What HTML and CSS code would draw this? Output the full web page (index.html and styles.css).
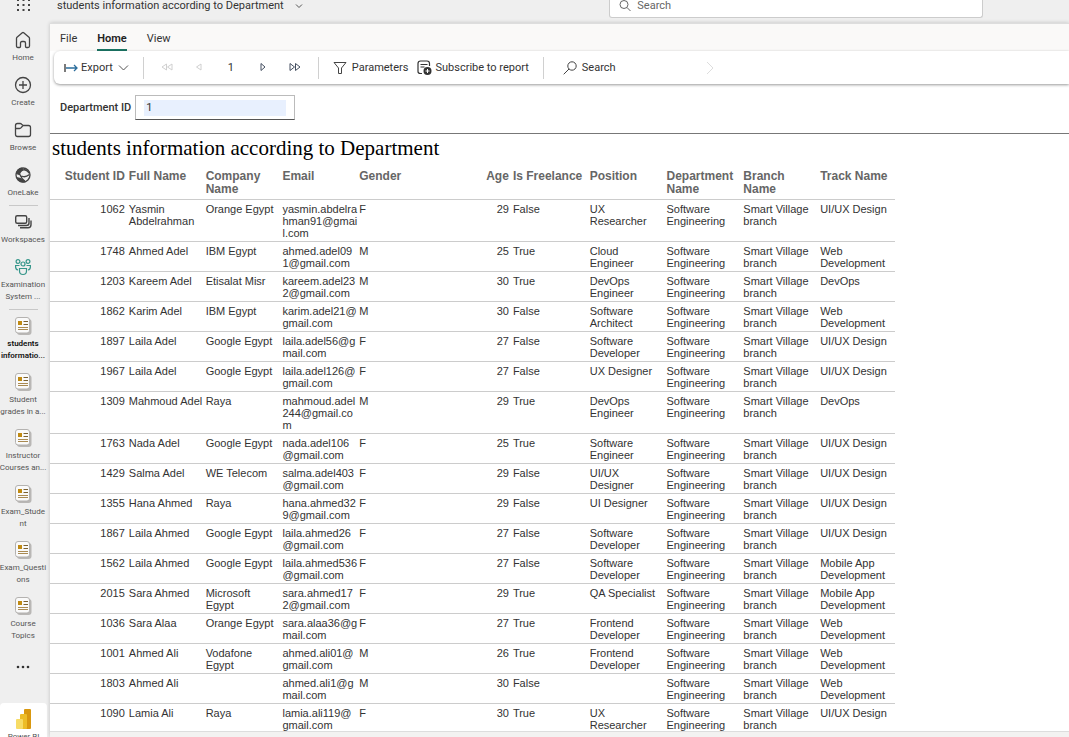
FILE: index.html
```html
<!DOCTYPE html>
<html lang="en">
<head>
<meta charset="utf-8">
<title>students information according to Department</title>
<link rel="stylesheet" href="styles.css">
</head>
<body>
<svg class="defs" aria-hidden="true">
  <symbol id="report" viewBox="0 0 20 20">
    <rect x="4" y="3" width="14.500" height="16" rx="3" fill="#b9b7b5"/>
    <rect x="2.500" y="1.500" width="14" height="15.500" rx="2.500" fill="#fafafa" stroke="#b4b2b0"/>
    <rect x="5" y="5" width="4" height="4" fill="#c08a12"/>
    <path d="M10.500 5.500H15M10.500 8.500H15" stroke="#7a6030"/>
    <path d="M5 11.500h10M5 13.500h10" stroke="#a98a52"/>
  </symbol>
</svg>
<div class="app">
  <header class="topbar">
    <button class="waffle" aria-label="App launcher">
      <svg width="14" height="12" viewBox="0 0 14 12" fill="#444"><path d="M0 0h2v1H0zM5.500 0h2v1h-2zM11 0h2v1h-2zM0 4h2v2H0zM5.500 4h2v2h-2zM11 4h2v2h-2zM0 9h2v2H0zM5.500 9h2v2h-2zM11 9h2v2h-2z"/></svg>
    </button>
    <button class="doc-name">students information according to Department
      <svg width="8" height="8" viewBox="0 0 8 8" fill="none" stroke="#555"><path d="M1 2.500l3 3 3-3"/></svg>
    </button>
    <label class="site-search">
      <svg width="12" height="12" viewBox="0 0 12 12" fill="none" stroke="#666"><circle cx="5" cy="4.500" r="4"/><path d="M8 7.500l3.500 3.500"/></svg>
      <input type="search" placeholder="Search" aria-label="Search">
    </label>
  </header>

  <nav class="rail" aria-label="Main">
    <a class="item" href="#"><svg width="20" height="20" viewBox="0 0 20 20" fill="none" stroke="#444" stroke-width="1.300" stroke-linejoin="round"><path d="M3.500 8.500Q3.500 7.800 4 7.300L9.300 2.800Q10 2.200 10.700 2.800L16 7.300Q16.500 7.800 16.500 8.500V16Q16.500 17.500 15 17.500H13.500Q12.500 17.500 12.500 16.500V13Q12.500 11.500 11 11.500H9Q7.500 11.500 7.500 13V16.500Q7.500 17.500 6.500 17.500H5Q3.500 17.500 3.500 16z"/></svg><span>Home</span></a>
    <a class="item" href="#"><svg width="20" height="20" viewBox="0 0 20 20" fill="none" stroke="#444" stroke-width="1.300"><circle cx="10" cy="10" r="7.500"/><path d="M10 6v8M6 10h8"/></svg><span>Create</span></a>
    <a class="item" href="#"><svg width="20" height="20" viewBox="0 0 20 20" fill="none" stroke="#444" stroke-width="1.300" stroke-linejoin="round"><path d="M2.500 5.500Q2.500 3.500 4.500 3.500H7Q8 3.500 8.600 4.200L10 5.500H15.500Q17.500 5.500 17.500 7.500V14.500Q17.500 16.500 15.500 16.500H4.500Q2.500 16.500 2.500 14.500zM2.500 8.500H6.500Q7.500 8.500 8.200 7.600L10 5.500"/></svg><span>Browse</span></a>
    <a class="item" href="#"><svg width="20" height="20" viewBox="0 0 20 20" fill="none" stroke="#444" stroke-width="1.300"><circle cx="10" cy="10" r="7"/><path d="M3.500 8.500Q4.500 4 8.500 3.300L10.500 5Q7 6 6.500 9.500z" fill="#444"/><path d="M4.500 13Q9 13.500 11.500 16.800Q7 17.500 4.500 13z" fill="#444"/><path d="M7 9.500Q9 14.500 12 16M8.500 11Q12 13 16.500 9.500M11 4.500Q14.500 5 16.500 8.500"/></svg><span>OneLake</span></a>
    <hr>
    <a class="item" href="#"><svg width="20" height="20" viewBox="0 0 20 20" fill="none" stroke="#444" stroke-width="1.400"><rect x="2.700" y="3.700" width="11" height="7.500" rx="1.500"/><path d="M5 13.500h8.500q2.500 0 2.500-2.500V6M7 15.700h8q3 0 3-3V8.500" /></svg><span>Workspaces</span></a>
    <a class="item" href="#"><svg width="20" height="20" viewBox="0 0 20 20" fill="none" stroke="#35968a" stroke-width="1.200"><circle cx="5" cy="4.500" r="1.900"/><circle cx="15" cy="4.500" r="1.900"/><circle cx="10" cy="7" r="2"/><path d="M6.500 11.500h7v2.500q0 3.500-3.500 3.500t-3.500-3.500zM6.500 8.500H2.600v1.500q0 2.500 2.400 3M13.500 8.500h3.900v1.500q0 2.500-2.400 3"/></svg><span>Examination<br>System ...</span></a>
    <hr>
    <div class="reports">
      <a class="item current" href="#"><svg width="20" height="20"><use href="#report"/></svg><span>students<br>informatio...</span></a>
      <a class="item" href="#"><svg width="20" height="20"><use href="#report"/></svg><span>Student<br>grades in a...</span></a>
      <a class="item" href="#"><svg width="20" height="20"><use href="#report"/></svg><span>Instructor<br>Courses an...</span></a>
      <a class="item" href="#"><svg width="20" height="20"><use href="#report"/></svg><span>Exam_Stude<br>nt</span></a>
      <a class="item" href="#"><svg width="20" height="20"><use href="#report"/></svg><span>Exam_Questi<br>ons</span></a>
      <a class="item" href="#"><svg width="20" height="20"><use href="#report"/></svg><span>Course<br>Topics</span></a>
    </div>
    <button class="more" aria-label="More"><svg width="14" height="4" viewBox="0 0 14 4" fill="#333"><circle cx="2" cy="2" r="1.300"/><circle cx="7" cy="2" r="1.300"/><circle cx="12" cy="2" r="1.300"/></svg></button>
    <a class="item powerbi" href="#"><svg width="20" height="20" viewBox="0 0 20 20"><rect x="10" y="0" width="7" height="20" rx="1" fill="#d9980f"/><rect x="6" y="5" width="7" height="15" rx="1" fill="#edbd27"/><rect x="2" y="10" width="7" height="10" rx="1" fill="#f7dc66"/></svg><span>Power BI</span></a>
  </nav>

  <main class="workspace">
    <div class="tabs" role="tablist">
      <button role="tab">File</button>
      <button role="tab" class="active" aria-selected="true">Home</button>
      <button role="tab">View</button>
    </div>
    <div class="toolbar">
      <button class="export"><svg width="14" height="12" viewBox="0 0 14 12" fill="none" stroke="#2b6d9c" stroke-width="1.300"><path d="M1 2v8" stroke="#333"/><path d="M2 6h11M10 3l3 3-3 3"/></svg>Export<svg width="11" height="8" viewBox="0 0 11 8" fill="none" stroke="#555"><path d="M1 1.500l4.500 4.500L10 1.500"/></svg></button>
      <div class="pager">
        <button disabled aria-label="First page"><svg width="12" height="10" viewBox="0 0 12 10" fill="none" stroke="#d0d0d0"><path d="M5.500 1v6L1 4zM11 1v6L6.500 4z"/></svg></button>
        <button disabled aria-label="Previous page"><svg width="12" height="10" viewBox="0 0 12 10" fill="none" stroke="#d0d0d0"><path d="M8 1v6L3.500 4z"/></svg></button>
        <span>1</span>
        <button aria-label="Next page"><svg width="12" height="10" viewBox="0 0 12 10" fill="none" stroke="#444f60"><path d="M4 .500v7L8 4z"/></svg></button>
        <button aria-label="Last page"><svg width="12" height="10" viewBox="0 0 12 10" fill="none" stroke="#444f60"><path d="M1 .500v7L5.500 4zM6.500 .500v7L11 4z"/></svg></button>
      </div>
      <div class="group">
        <button><svg width="14" height="14" viewBox="0 0 14 14" fill="none" stroke="#444"><path d="M1 1.500h12L8.500 7v5.500h-3V7z"/></svg>Parameters</button>
        <button class="subscribe"><svg width="15" height="16" viewBox="0 0 15 16" fill="none" stroke="#333"><path d="M5 13.500H3.500q-2.500 0-2.500-2V3.500Q1 1 3.500 1h6.500Q12.500 1 12.500 3.500V6M3.500 4.500h7M3.500 7h4" stroke-width="1.200"/><circle cx="10.500" cy="11" r="4" fill="#333" stroke="none"/><path d="M10.500 9v4M8.500 11h4" stroke="#fff"/></svg>Subscribe to report</button>
      </div>
      <button class="find"><svg width="14" height="14" viewBox="0 0 14 14" fill="none" stroke="#444"><circle cx="9" cy="5" r="4.200"/><path d="M6 8L.700 13.300"/></svg>Search</button>
      <svg class="next" width="8" height="14" viewBox="0 0 8 14" fill="none" stroke="#ddd"><path d="M1 1l6 6-6 6"/></svg>
    </div>
    <form class="params">
      <label for="dept">Department ID</label>
      <div class="field"><input id="dept" type="text" value="1"></div>
    </form>
    <section class="report">
      <h1>students information according to Department</h1>
      <table>
        <thead><tr><th class="num">Student ID</th><th>Full Name</th><th>Company Name</th><th>Email</th><th>Gender</th><th class="num">Age</th><th>Is Freelance</th><th>Position</th><th>Department Name</th><th>Branch Name</th><th>Track Name</th></tr></thead>
        <tbody>
          <tr><td class="num">1062</td><td>Yasmin Abdelrahman</td><td>Orange Egypt</td><td class="mail">yasmin.abdelra<br>hman91@gmai<br>l.com</td><td>F</td><td class="num">29</td><td>False</td><td>UX Researcher</td><td>Software Engineering</td><td>Smart Village branch</td><td>UI/UX Design</td></tr>
          <tr><td class="num">1748</td><td>Ahmed Adel</td><td>IBM Egypt</td><td class="mail">ahmed.adel09<br>1@gmail.com</td><td>M</td><td class="num">25</td><td>True</td><td>Cloud Engineer</td><td>Software Engineering</td><td>Smart Village branch</td><td>Web Development</td></tr>
          <tr><td class="num">1203</td><td>Kareem Adel</td><td>Etisalat Misr</td><td class="mail">kareem.adel23<br>2@gmail.com</td><td>M</td><td class="num">30</td><td>True</td><td>DevOps Engineer</td><td>Software Engineering</td><td>Smart Village branch</td><td>DevOps</td></tr>
          <tr><td class="num">1862</td><td>Karim Adel</td><td>IBM Egypt</td><td class="mail">karim.adel21@<br>gmail.com</td><td>M</td><td class="num">30</td><td>False</td><td>Software Architect</td><td>Software Engineering</td><td>Smart Village branch</td><td>Web Development</td></tr>
          <tr><td class="num">1897</td><td>Laila Adel</td><td>Google Egypt</td><td class="mail">laila.adel56@g<br>mail.com</td><td>F</td><td class="num">27</td><td>False</td><td>Software Developer</td><td>Software Engineering</td><td>Smart Village branch</td><td>UI/UX Design</td></tr>
          <tr><td class="num">1967</td><td>Laila Adel</td><td>Google Egypt</td><td class="mail">laila.adel126@<br>gmail.com</td><td>F</td><td class="num">27</td><td>False</td><td>UX Designer</td><td>Software Engineering</td><td>Smart Village branch</td><td>UI/UX Design</td></tr>
          <tr><td class="num">1309</td><td>Mahmoud Adel</td><td>Raya</td><td class="mail">mahmoud.adel<br>244@gmail.co<br>m</td><td>M</td><td class="num">29</td><td>True</td><td>DevOps Engineer</td><td>Software Engineering</td><td>Smart Village branch</td><td>DevOps</td></tr>
          <tr><td class="num">1763</td><td>Nada Adel</td><td>Google Egypt</td><td class="mail">nada.adel106<br>@gmail.com</td><td>F</td><td class="num">25</td><td>True</td><td>Software Engineer</td><td>Software Engineering</td><td>Smart Village branch</td><td>UI/UX Design</td></tr>
          <tr><td class="num">1429</td><td>Salma Adel</td><td>WE Telecom</td><td class="mail">salma.adel403<br>@gmail.com</td><td>F</td><td class="num">29</td><td>False</td><td>UI/UX Designer</td><td>Software Engineering</td><td>Smart Village branch</td><td>UI/UX Design</td></tr>
          <tr><td class="num">1355</td><td>Hana Ahmed</td><td>Raya</td><td class="mail">hana.ahmed32<br>9@gmail.com</td><td>F</td><td class="num">29</td><td>False</td><td>UI Designer</td><td>Software Engineering</td><td>Smart Village branch</td><td>UI/UX Design</td></tr>
          <tr><td class="num">1867</td><td>Laila Ahmed</td><td>Google Egypt</td><td class="mail">laila.ahmed26<br>@gmail.com</td><td>F</td><td class="num">27</td><td>False</td><td>Software Developer</td><td>Software Engineering</td><td>Smart Village branch</td><td>UI/UX Design</td></tr>
          <tr><td class="num">1562</td><td>Laila Ahmed</td><td>Google Egypt</td><td class="mail">laila.ahmed536<br>@gmail.com</td><td>F</td><td class="num">27</td><td>False</td><td>Software Developer</td><td>Software Engineering</td><td>Smart Village branch</td><td>Mobile App Development</td></tr>
          <tr><td class="num">2015</td><td>Sara Ahmed</td><td>Microsoft Egypt</td><td class="mail">sara.ahmed17<br>2@gmail.com</td><td>F</td><td class="num">29</td><td>True</td><td>QA Specialist</td><td>Software Engineering</td><td>Smart Village branch</td><td>Mobile App Development</td></tr>
          <tr><td class="num">1036</td><td>Sara Alaa</td><td>Orange Egypt</td><td class="mail">sara.alaa36@g<br>mail.com</td><td>F</td><td class="num">27</td><td>True</td><td>Frontend Developer</td><td>Software Engineering</td><td>Smart Village branch</td><td>Web Development</td></tr>
          <tr><td class="num">1001</td><td>Ahmed Ali</td><td>Vodafone Egypt</td><td class="mail">ahmed.ali01@<br>gmail.com</td><td>M</td><td class="num">26</td><td>True</td><td>Frontend Developer</td><td>Software Engineering</td><td>Smart Village branch</td><td>Web Development</td></tr>
          <tr><td class="num">1803</td><td>Ahmed Ali</td><td></td><td class="mail">ahmed.ali1@g<br>mail.com</td><td>M</td><td class="num">30</td><td>False</td><td></td><td>Software Engineering</td><td>Smart Village branch</td><td>Web Development</td></tr>
          <tr><td class="num">1090</td><td>Lamia Ali</td><td>Raya</td><td class="mail">lamia.ali119@<br>gmail.com</td><td>F</td><td class="num">30</td><td>True</td><td>UX Researcher</td><td>Software Engineering</td><td>Smart Village branch</td><td>UI/UX Design</td></tr>
        </tbody>
      </table>
    </section>
    <footer class="status"></footer>
  </main>
</div>
</body>
</html>
```
FILE: styles.css
```css
* { box-sizing: border-box; }
body { margin: 0; font-family: Roboto, "Open Sans", sans-serif; font-size: 11px; color: #333; }
button { border: 0; padding: 0; background: none; font: inherit; color: inherit; display: flex; align-items: center; }
input { font: inherit; color: inherit; border: 0; outline: 0; min-width: 0; }
svg { display: block; flex: none; }
.defs { position: absolute; width: 0; height: 0; }

.app { height: 100vh; overflow: hidden; display: grid; grid-template: 23px minmax(0, 1fr) / 50px minmax(0, 1fr); background: #efefef; }

.topbar { grid-column: 1 / 3; display: flex; align-items: flex-start; position: relative; line-height: 12px; }
.waffle { width: 50px; padding-left: 17px; }
.doc-name { padding-left: 7px; gap: 11px; }
.site-search { position: absolute; left: 57%; width: 35%; height: 18px; display: flex; align-items: flex-start; gap: 6px; padding-left: 9px; background: #fff; border: 1px solid #ccc; border-top: 0; border-radius: 0 0 3px 3px; }
.site-search input { flex: 1; height: 12px; padding: 0; background: none; }
.site-search input::placeholder { color: #666; }

.rail { display: flex; flex-direction: column; align-items: center; padding-top: 7px; padding-right: 4px; overflow: hidden; }
.item { display: flex; flex-direction: column; align-items: center; gap: 2px; margin-bottom: 11px; flex: none; font-size: 8px; line-height: 12px; text-align: center; text-decoration: none; color: #555; white-space: nowrap; }
.rail hr { flex: none; width: 29px; height: 1px; margin: -5px 0 6px; border: 0; background: #c8c8c8; }
.reports .item { margin-bottom: 10px; }
.item.current { color: #111; font-weight: 600; }
.more { margin-top: 13px; }
.item.powerbi { margin: auto 0 0; width: 47px; height: 34px; padding-top: 6px; background: #fff; border-radius: 4px 4px 0 0; align-self: flex-start; }

.workspace { display: flex; flex-direction: column; background: #fff; border-top: 1px solid #ddd; box-shadow: 0 0 4px #0003; min-width: 0; }
.tabs { display: flex; gap: 20px; height: 27px; flex: none; padding: 3px 10px 0; background: #faf9f8; }
.tabs button { height: 24px; border-bottom: 2px solid transparent; }
.tabs .active { font-weight: 600; border-bottom-color: #1b7564; color: #222; }

.toolbar { display: flex; align-items: center; flex: none; height: 33px; margin-left: 4px; padding-left: 10px; background: #fff; border-radius: 6px 0 0 6px; box-shadow: 0 1px 3px #0006; }
.toolbar button { gap: 5px; height: 22px; }
.toolbar .export { gap: 3px; padding-right: 14px; }
.toolbar .export svg:last-child { margin-left: 2px; }
.pager { display: flex; align-items: center; height: 22px; gap: 20px; padding: 0 17px; border: solid #d0d0d0; border-width: 0 1px; }
.pager span { width: 12px; text-align: center; }
.group { display: flex; gap: 9px; height: 22px; padding: 0 14px; border-right: 1px solid #d0d0d0; }
.toolbar .subscribe { gap: 3px; }
.find { margin-left: 19px; }
.next { margin-left: 90px; }

.params { display: flex; align-items: center; flex: none; height: 50px; padding: 0 0 3px 10px; gap: 4px; border-bottom: 1px solid #777; }
.params label { font-weight: 500; }
.field { width: 160px; height: 25px; padding: 4px 8px; border: 1px solid #bbb; border-bottom-color: #555; }
.field input { display: block; width: 100%; height: 16px; padding: 0 2px; background: #e8f0fe; }

.report { flex: 1; min-height: 0; overflow: hidden; font-family: "Liberation Sans", Arial, sans-serif; }
h1 { margin: 0; padding: 2px 2px 7px; font: 21px/24px "Liberation Serif", "Times New Roman", serif; color: #000; white-space: nowrap; }
table { width: 845px; table-layout: fixed; border-collapse: separate; border-spacing: 0; font-size: 11px; line-height: 12px; }
th, td { padding: 3px 0 2px 2px; text-align: left; vertical-align: top; border-bottom: 1px solid #ccc; }
th { font-size: 12px; line-height: 13px; color: #666; padding-bottom: 3px; }
.num { text-align: right; padding-right: 2px; }
.mail { white-space: nowrap; }

.status { flex: none; height: 6px; background: #f3f2f1; border-top: 1px solid #ddd; }
```
